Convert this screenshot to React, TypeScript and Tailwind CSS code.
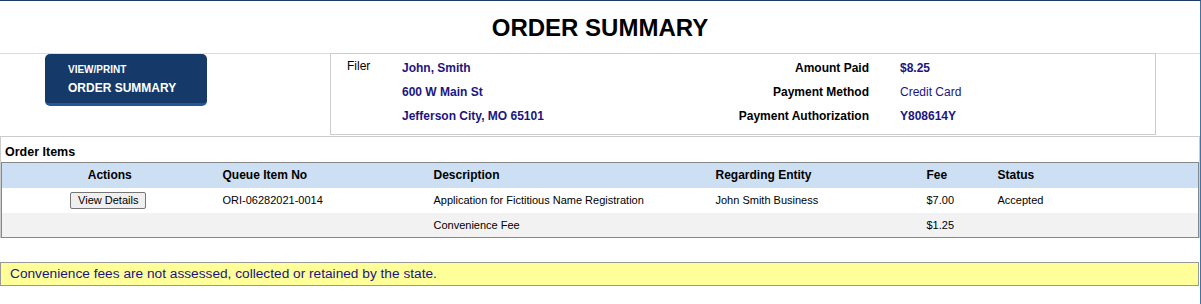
import React from 'react';

const navy = 'text-[#1c1580]';

const App: React.FC = () => {
  return (
    <div className="w-[1201px] h-[304px] bg-white font-['Liberation_Sans',Arial,sans-serif] text-black">
      <div className="w-[1201px] h-[304px] border-t border-r border-t-[#1d3c66] border-r-[#3d73aa]">
        {/* Title */}
        <div className="h-[53px] border-b border-[#dddddd] flex items-center justify-center">
          <h1 className="text-[24px] font-bold leading-none pt-[1px]">ORDER SUMMARY</h1>
        </div>

        {/* Print button + filer info */}
        <div className="h-[82px] flex">
          <div className="w-[330px] pl-[45px]">
            <button className="w-[162px] h-[52px] rounded-[5px] bg-[#153a6a] border-b-[3px] border-[#22579a] text-white text-left pl-[23px] flex flex-col">
              <span className="text-[10px] font-bold leading-none mt-[11px]">VIEW/PRINT</span>
              <span className="text-[12px] font-bold leading-none mt-[7px]">ORDER SUMMARY</span>
            </button>
          </div>
          <div className="w-[826px] h-[82px] -mt-px border border-[#cccccc] flex pt-[2px] text-[12px]">
            <div className="w-[71px] pl-[16px] leading-4 pt-[2px]">Filer</div>
            <div className={`w-[300px] font-bold ${navy}`}>
              <div className="h-6 leading-6">John, Smith</div>
              <div className="h-6 leading-6">600 W Main St</div>
              <div className="h-6 leading-6">Jefferson City, MO 65101</div>
            </div>
            <div className="w-[167px] font-bold text-right">
              <div className="h-6 leading-6">Amount Paid</div>
              <div className="h-6 leading-6">Payment Method</div>
              <div className="h-6 leading-6">Payment Authorization</div>
            </div>
            <div className={`pl-[31px] ${navy}`}>
              <div className="h-6 leading-6 font-bold">$8.25</div>
              <div className="h-6 leading-6">Credit Card</div>
              <div className="h-6 leading-6 font-bold">Y808614Y</div>
            </div>
          </div>
        </div>

        {/* Order items */}
        <div className="w-[1200px] border-t border-l border-r border-[#cccccc]">
          <h2 className="text-[12.5px] font-bold leading-[20px] pt-[5px] pl-[4px]">Order Items</h2>
          <table className="w-full table-fixed border-collapse border border-[#888888] text-[11px]">
            <colgroup>
              <col className="w-[216px]" />
              <col className="w-[211px]" />
              <col className="w-[282px]" />
              <col className="w-[211px]" />
              <col className="w-[71px]" />
              <col />
            </colgroup>
            <thead>
              <tr className="h-[25px] bg-[#cddff3] text-[12px] font-bold text-left">
                <th className="text-center">Actions</th>
                <th className="pl-[5px]">Queue Item No</th>
                <th className="pl-[5px]">Description</th>
                <th className="pl-[5px]">Regarding Entity</th>
                <th className="pl-[5px]">Fee</th>
                <th className="pl-[5px]">Status</th>
              </tr>
            </thead>
            <tbody>
              <tr className="h-[25px] bg-white">
                <td className="text-center pr-[3px]">
                  <button className="h-[17px] px-[7px] border border-[#767676] rounded-[2px] bg-[#efefef] text-[11px] leading-none">
                    View Details
                  </button>
                </td>
                <td className="pl-[5px]">ORI-06282021-0014</td>
                <td className="pl-[5px]">Application for Fictitious Name Registration</td>
                <td className="pl-[5px]">John Smith Business</td>
                <td className="pl-[5px]">$7.00</td>
                <td className="pl-[5px]">Accepted</td>
              </tr>
              <tr className="h-[25px] bg-[#f2f2f2]">
                <td></td>
                <td></td>
                <td className="pl-[5px]">Convenience Fee</td>
                <td></td>
                <td className="pl-[5px]">$1.25</td>
                <td></td>
              </tr>
            </tbody>
          </table>
        </div>

        {/* Notice */}
        <div className="mt-[24px] w-[1199px] h-[24px] border border-[#999999] bg-[#ffff99] flex items-center pl-[9px]">
          <span className={`text-[13.7px] ${navy}`}>Convenience fees are not assessed, collected or retained by the state.</span>
        </div>
      </div>
    </div>
  );
};

export default App;
